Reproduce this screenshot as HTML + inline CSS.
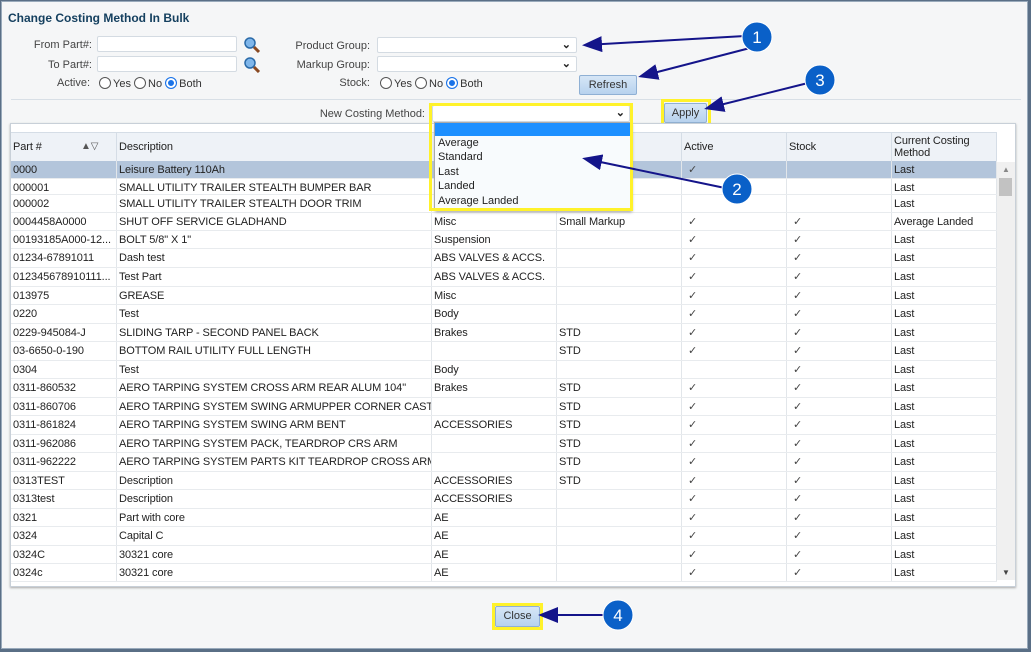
<!DOCTYPE html>
<html><head><meta charset="utf-8"><style>
*{box-sizing:border-box;margin:0;padding:0}
body{width:1031px;height:652px;overflow:hidden;background:#5a6f86;font-family:"Liberation Sans",sans-serif;font-size:11px;color:#222;position:relative}
.win{position:absolute;left:1px;top:1px;width:1027px;height:648px;background:#f5f6f7;border:1px solid #9ab}
.t{position:absolute;left:6px;top:9px;font-weight:bold;font-size:12px;color:#15405f}
.l{position:absolute;color:#444;text-align:right}
.in{position:absolute;height:16px;background:#fff;border:1px solid #d4dbe2;border-radius:2px}
.rad{position:absolute;color:#333}
.rad i{display:inline-block;width:12px;height:12px;border:1px solid #555;border-radius:50%;vertical-align:-2px;margin-right:2px;background:#fff}
.rad i.on{border-color:#1a73e8;box-shadow:inset 0 0 0 2px #fff;background:#1a73e8}
.btn{position:absolute;background:linear-gradient(#d6e6f6,#b7d2ee);border:1px solid #8fb0d4;border-radius:2px;color:#333;text-align:center;font-size:11px}
.yb{position:absolute;border:3px solid #fff22a}
.grid{position:absolute;left:8px;top:121px;width:1006px;height:464px;background:#fff;border:1px solid #c8d0d8;box-shadow:0 1px 2px #aaa}
.hd{position:absolute;left:0;top:8px;width:986px;height:30px;background:#eef2f7;border-top:1px solid #d5dde6;border-bottom:1px solid #d5dde6}
.c{position:absolute;top:0;height:100%;border-right:1px solid #e2e6ea;padding-left:2px;white-space:nowrap;overflow:hidden;letter-spacing:-0.1px}
.row{position:absolute;left:0;width:986px;border-bottom:1px solid #e8ebee}
.row .c{line-height:18px}
.hd .c{line-height:28px;border-right:1px solid #d5dde6}
.sb{position:absolute;left:986px;top:38px;width:18px;height:418px;background:#f0f0f0}
</style></head><body>
<div class="win">
<div class="t">Change Costing Method In Bulk</div>
<div class="l" style="left:10px;top:37px;width:80px">From Part#:</div>
<div class="in" style="left:95px;top:34px;width:140px"></div>
<div class="l" style="left:10px;top:57px;width:80px">To Part#:</div>
<div class="in" style="left:95px;top:54px;width:140px"></div>
<svg style="position:absolute;left:242px;top:35px" width="18" height="36"><g><circle cx="6" cy="6" r="5" fill="#7fb6ea" stroke="#2a6aa8" stroke-width="1.5"/><line x1="10" y1="10" x2="15" y2="15" stroke="#8a4a22" stroke-width="3"/></g><g transform="translate(0,20)"><circle cx="6" cy="6" r="5" fill="#7fb6ea" stroke="#2a6aa8" stroke-width="1.5"/><line x1="10" y1="10" x2="15" y2="15" stroke="#8a4a22" stroke-width="3"/></g></svg>
<div class="l" style="left:10px;top:75px;width:78px">Active:</div>
<div class="rad" style="left:97px;top:75px"><i></i>Yes <i></i>No <i class="on"></i>Both</div>
<div class="l" style="left:270px;top:38px;width:98px">Product Group:</div>
<div class="in" style="left:375px;top:35px;width:200px"><span style="position:absolute;right:5px;top:0;font-size:11px;font-weight:bold">&#8964;</span></div>
<div class="l" style="left:270px;top:57px;width:98px">Markup Group:</div>
<div class="in" style="left:375px;top:54px;width:200px"><span style="position:absolute;right:5px;top:0;font-size:11px;font-weight:bold">&#8964;</span></div>
<div class="l" style="left:270px;top:75px;width:98px">Stock:</div>
<div class="rad" style="left:378px;top:75px"><i></i>Yes <i></i>No <i class="on"></i>Both</div>
<div class="btn" style="left:577px;top:73px;width:58px;height:20px;line-height:18px">Refresh</div>
<div style="position:absolute;left:9px;top:97px;width:1010px;border-top:1px solid #d8dfe6"></div>
<div class="l" style="left:290px;top:106px;width:133px">New Costing Method:</div>
<div class="btn" style="left:662px;top:101px;width:43px;height:20px;line-height:18px">Apply</div>
<div class="yb" style="left:659px;top:97px;width:50px;height:27px"></div>

<div class="grid">
<div class="hd">
<div class="c" style="left:0;width:106px">Part # <span style="position:absolute;left:70px;color:#555;font-size:10px">&#9650;&#9661;</span></div>
<div class="c" style="left:106px;width:315px">Description</div>
<div class="c" style="left:421px;width:125px"></div>
<div class="c" style="left:546px;width:125px"></div>
<div class="c" style="left:671px;width:105px">Active</div>
<div class="c" style="left:776px;width:105px">Stock</div>
<div class="c" style="left:881px;width:105px;line-height:12px;padding-top:2px">Current Costing<br>Method</div>
</div>
<div class="sb"><div style="position:absolute;left:2px;top:16px;width:13px;height:18px;background:#c2c2c2"></div><div style="position:absolute;left:5px;top:3px;font-size:8px;color:#888">&#9650;</div><div style="position:absolute;left:5px;bottom:3px;font-size:8px;color:#444">&#9660;</div></div>
<div id="rows"></div>
</div>

<div class="in" style="left:430px;top:103px;width:198px;height:17px"><span style="position:absolute;right:4px;top:0;font-weight:bold">&#8964;</span></div>
<div style="position:absolute;left:432px;top:120px;width:197px;height:88px;background:#f8fbfd;border:1px solid #aaa;box-shadow:1px 2px 3px #999;line-height:14.4px;padding-left:3px">
<div style="height:13px;background:#1e90ff;margin-left:-3px"></div>
Average<br>Standard<br>Last<br>Landed<br>Average Landed</div>
<div class="yb" style="left:427px;top:101px;width:204px;height:108px"></div>

<div class="btn" style="left:493px;top:604px;width:45px;height:21px;line-height:19px">Close</div>
<div class="yb" style="left:490px;top:601px;width:51px;height:27px"></div>
</div>

<svg style="position:absolute;left:0;top:0" width="1031" height="652">
<defs><marker id="a" markerWidth="10" markerHeight="8" refX="8" refY="4" orient="auto"><path d="M0,0 L10,4 L0,8 Z" fill="#14148a"/></marker></defs>
<g stroke="#14148a" stroke-width="2" fill="none" marker-end="url(#a)">
<line x1="745" y1="36" x2="586" y2="45"/>
<line x1="750" y1="48" x2="642" y2="76"/>
<line x1="808" y1="83" x2="708" y2="108"/>
<line x1="725" y1="188" x2="586" y2="159"/>
<line x1="604" y1="615" x2="542" y2="615"/>
</g>
<g fill="#0a60c8" stroke="#fff" stroke-width="1"><circle cx="757" cy="37" r="15"/><circle cx="737" cy="189" r="15"/><circle cx="820" cy="80" r="15"/><circle cx="618" cy="615" r="15"/></g>
<g fill="#fff" font-family="Liberation Sans" font-size="17" text-anchor="middle"><text x="757" y="43">1</text><text x="737" y="195">2</text><text x="820" y="86">3</text><text x="618" y="621">4</text></g>
</svg>

<script>
var d=[["0000","Leisure Battery 110Ah","","","✓","","Last"],
["000001","SMALL UTILITY TRAILER STEALTH BUMPER BAR","","","","","Last"],
["000002","SMALL UTILITY TRAILER STEALTH DOOR TRIM","","","","","Last"],
["0004458A0000","SHUT OFF SERVICE GLADHAND","Misc","Small Markup","✓","✓","Average Landed"],
["00193185A000-12...","BOLT 5/8\" X 1\"","Suspension","","✓","✓","Last"],
["01234-67891011","Dash test","ABS VALVES & ACCS.","","✓","✓","Last"],
["012345678910111...","Test Part","ABS VALVES & ACCS.","","✓","✓","Last"],
["013975","GREASE","Misc","","✓","✓","Last"],
["0220","Test","Body","","✓","✓","Last"],
["0229-945084-J","SLIDING TARP - SECOND PANEL BACK","Brakes","STD","✓","✓","Last"],
["03-6650-0-190","BOTTOM RAIL UTILITY FULL LENGTH","","STD","✓","✓","Last"],
["0304","Test","Body","","","✓","Last"],
["0311-860532","AERO TARPING SYSTEM CROSS ARM REAR ALUM 104\"","Brakes","STD","✓","✓","Last"],
["0311-860706","AERO TARPING SYSTEM SWING ARMUPPER CORNER CAST","","STD","✓","✓","Last"],
["0311-861824","AERO TARPING SYSTEM SWING ARM BENT","ACCESSORIES","STD","✓","✓","Last"],
["0311-962086","AERO TARPING SYSTEM PACK, TEARDROP CRS ARM","","STD","✓","✓","Last"],
["0311-962222","AERO TARPING SYSTEM PARTS KIT TEARDROP CROSS ARM","","STD","✓","✓","Last"],
["0313TEST","Description","ACCESSORIES","STD","✓","✓","Last"],
["0313test","Description","ACCESSORIES","","✓","✓","Last"],
["0321","Part with core","AE","","✓","✓","Last"],
["0324","Capital C","AE","","✓","✓","Last"],
["0324C","30321 core","AE","","✓","✓","Last"],
["0324c","30321 core","AE","","✓","✓","Last"]];
var cy=[170,188,204,222,240,258,277,296,314,333,351,370,388,407,425,444,462,481,499,518,536,555,573];
var L=[0,106,421,546,671,776,881],W=[106,315,125,125,105,105,105];
var h="";
d.forEach(function(r,i){
 var top=cy[i]-9-124, ht=(i<22?cy[i+1]-cy[i]:18);
 h+='<div class="row" style="top:'+top+'px;height:'+ht+'px;'+(i==0?'background:#b3c5db':'')+'">';
 r.forEach(function(v,j){h+='<div class="c" style="left:'+L[j]+'px;width:'+W[j]+'px;'+(j==4||j==5?'padding-left:6px;color:#444':'')+'">'+v.replace(/&/g,'&amp;')+'</div>';});
 h+='</div>';});
document.getElementById('rows').innerHTML=h;
</script>
</body></html>
